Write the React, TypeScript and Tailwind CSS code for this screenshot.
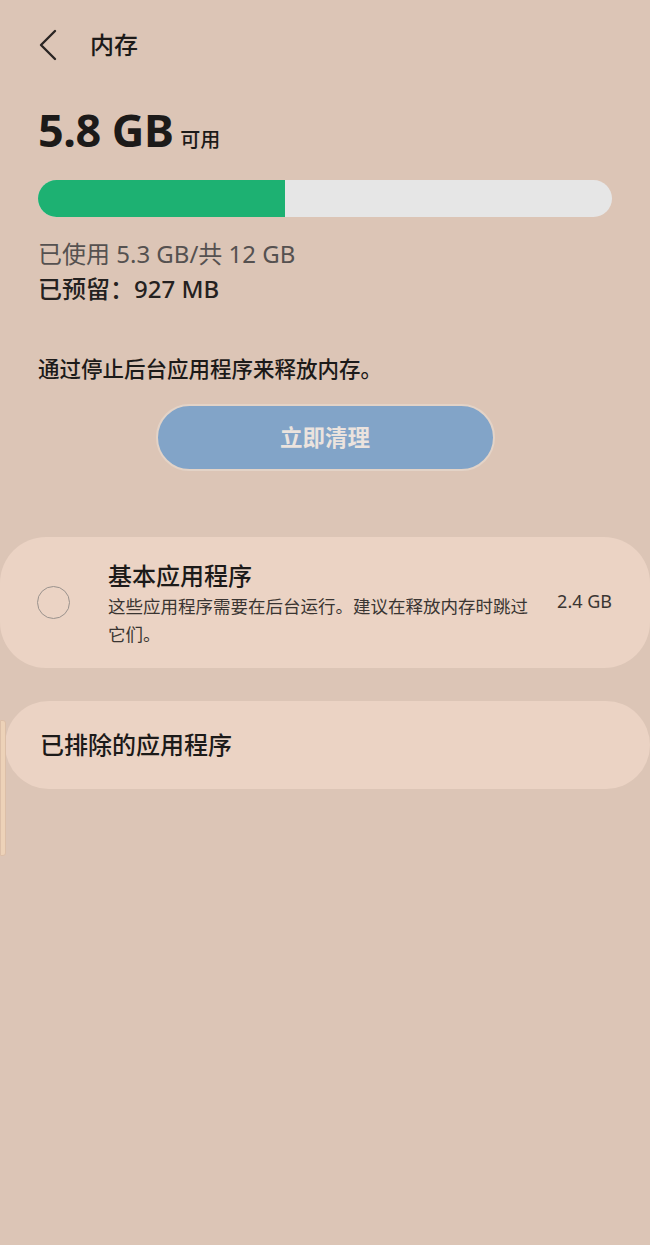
const font = "font-['Noto_Sans','Noto_Sans_CJK_SC',sans-serif]";

const BackIcon = () => (
  <svg width="20" height="32" viewBox="0 0 20 32" fill="none" className="text-[#2a2624]">
    <path d="M17 2 L3 16 L17 30" stroke="currentColor" strokeWidth="2.4" strokeLinecap="round" strokeLinejoin="round" />
  </svg>
);

const App = () => {
  const used = 43;

  return (
    <div className={`relative min-h-[1245px] w-[650px] bg-[#dcc5b6] text-[#1c1a19] ${font}`}>
      {/* Header */}
      <div className="flex h-[90px] items-center pl-[38px]">
        <BackIcon />
        <h1 className="ml-[32px] text-[24px] font-medium leading-none">内存</h1>
      </div>

      {/* Summary */}
      <div className="px-[38px] pt-[17px]">
        <div className="flex items-baseline">
          <span className="text-[45px] font-bold leading-none tracking-[-0.5px]">5.8 GB</span>
          <span className="ml-[7px] text-[20px] font-medium">可用</span>
        </div>

        <div className="mt-[25px] flex h-[37px] w-full overflow-hidden rounded-full bg-[#e6e6e6]">
          <div className="h-full bg-[#1db172]" style={{ width: `${used}%` }} />
        </div>

        <p className="mt-[19px] text-[24px] leading-[35px] text-[#555150]">已使用 5.3 GB/共 12 GB</p>
        <p className="text-[24px] font-medium leading-[35px] text-[#242120]">已预留：927 MB</p>

        <p className="mt-[48px] text-[21.5px] font-medium leading-[30px]">通过停止后台应用程序来释放内存。</p>
      </div>

      <div className="mt-[20px] flex justify-center">
        <button className="h-[67px] w-[339px] rounded-full border-2 border-[#e3d3c7] bg-[#82a4c8] text-[22.5px] font-bold text-[#ebe3de]">
          立即清理
        </button>
      </div>

      {/* Essential apps */}
      <div className="mt-[66px] flex h-[131px] items-center rounded-[46px] bg-[#ebd3c4] pl-[37px] pr-[38px]">
        <div className="h-[33px] w-[33px] shrink-0 rounded-full border-[1.5px] border-[#9a928d]" />
        <div className="ml-[38px] flex-1 pt-[2px]">
          <p className="text-[24px] font-medium leading-[32px]">基本应用程序</p>
          <p className="text-[17.5px] leading-[28px] text-[#3a3532]">
            <span className="block whitespace-nowrap">这些应用程序需要在后台运行。建议在释放内存时跳过</span>
            <span className="block">它们。</span>
          </p>
        </div>
        <span className="mb-[2px] ml-auto whitespace-nowrap text-[18px] text-[#3a3532]">2.4 GB</span>
      </div>

      {/* Excluded apps */}
      <div className="ml-[5px] mt-[33px] flex h-[88px] items-center rounded-[44px] bg-[#ebd3c4] pl-[35px]">
        <p className="text-[24px] font-medium">已排除的应用程序</p>
      </div>

      {/* Edge handle */}
      <div className="absolute left-0 top-[720px] h-[136px] w-[6px] rounded-r-[3px] border border-[#dcbfa8] bg-[#edd2b8]" />
    </div>
  );
};

export default App;
